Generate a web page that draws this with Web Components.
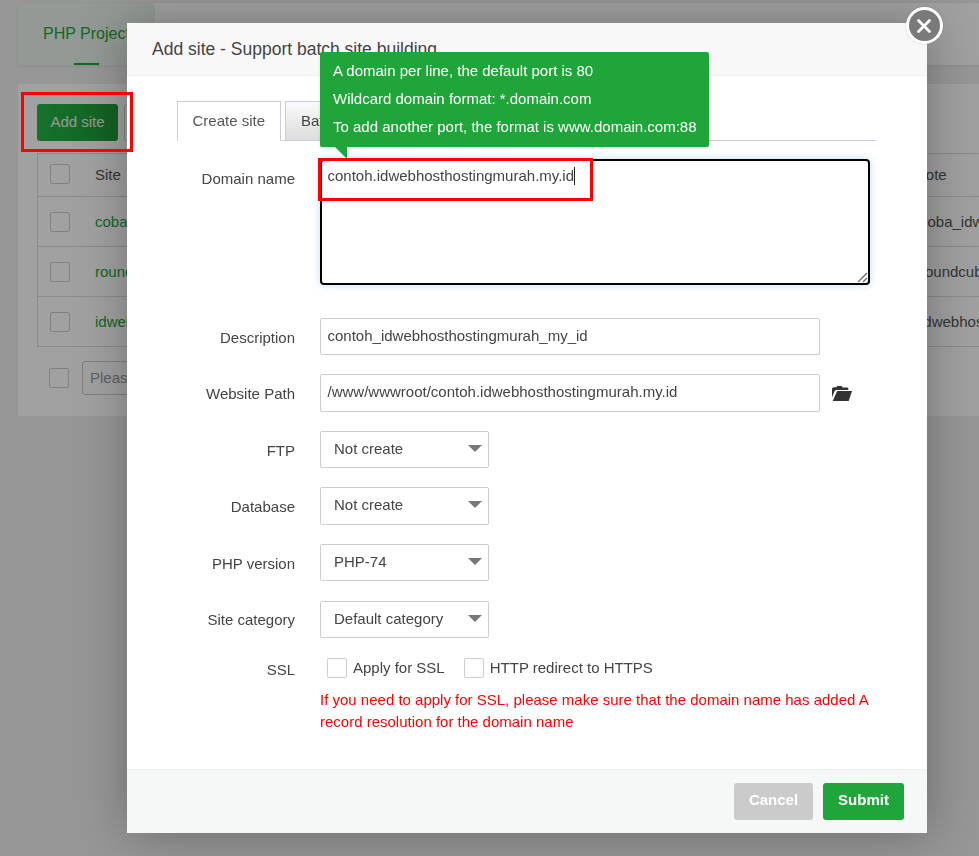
<!DOCTYPE html>
<html><head><meta charset="utf-8">
<style>
html,body{margin:0;padding:0;height:100%;overflow:hidden;background:#f0f0f0}
body{font:15px "Liberation Sans",Arial,sans-serif;color:#444}
</style></head><body>
<bg-page></bg-page>
<modal-shade></modal-shade>
<site-dialog>
  <span slot="title">Add site - Support batch site building</span>
  <form-row label="Domain name"><domain-box>contoh.idwebhosthostingmurah.my.id</domain-box></form-row>
  <form-row label="Description"><text-field>contoh_idwebhosthostingmurah_my_id</text-field></form-row>
  <form-row label="Website Path"><text-field folder>/www/wwwroot/contoh.idwebhosthostingmurah.my.id</text-field></form-row>
  <form-row label="FTP"><select-box>Not create</select-box></form-row>
  <form-row label="Database"><select-box>Not create</select-box></form-row>
  <form-row label="PHP version"><select-box>PHP-74</select-box></form-row>
  <form-row label="Site category" style="--lh:38px"><select-box>Default category</select-box></form-row>
  <form-row label="SSL" style="--lh:26px"><ssl-block></ssl-block></form-row>
</site-dialog>
<hint-tip></hint-tip>
<mark-rect style="left:21px;top:92px;width:106px;height:54px"></mark-rect>
<mark-rect style="left:318px;top:158px;width:269px;height:37px"></mark-rect>
<script>
function def(name,html,connected){
  customElements.define(name,class extends HTMLElement{
    constructor(){super();this.attachShadow({mode:'open'}).innerHTML=html}
    connectedCallback(){if(connected)connected.call(this,this.shadowRoot)}
  });
}
const cb='display:inline-block;width:18px;height:18px;border:1px solid #ccc;border-radius:2px;background:#fff;box-sizing:content-box';
def('bg-page',`<style>
:host{display:block;width:979px;height:856px;padding:3px 0 0 18px;box-sizing:border-box;overflow:hidden;background:#f0f0f0;color:#555;font:15px "Liberation Sans",Arial,sans-serif}
.top{display:flex;width:1200px;height:62px;background:#fff;border-radius:4px 0 0 4px;box-shadow:0 1px 4px rgba(0,0,0,.08)}
.tab{width:137px;box-sizing:border-box;padding:22px 0 0 25px;background:#e9f3ec;color:#20a53a;font-size:16px;position:relative;border-radius:4px;white-space:nowrap}
.tab i{display:block;width:25px;height:2px;background:#20a53a;position:absolute;left:56px;bottom:0}
.panel{width:1200px;margin-top:19px;height:332px;background:#fff;padding:20px 19px;box-sizing:border-box}
.bar{display:flex;gap:6px;height:37px;margin-bottom:12px}
.add{width:81px;height:37px;padding-bottom:3px;box-sizing:border-box;background:linear-gradient(90deg,#22b545,#209a38);color:#f0f0f0;border-radius:3px;display:flex;align-items:center;justify-content:center}
.ghost{width:80px;border:1px solid #ccc;border-radius:3px;box-sizing:border-box}
.tbl{border:1px solid #ddd;border-right:0;width:1143px;box-sizing:border-box}
.r{display:grid;grid-template-columns:57px 819px 1fr;height:50px;align-items:center;border-top:1px solid #ddd;white-space:nowrap;box-sizing:border-box}
.r:first-child{height:42px;border-top:0;padding-bottom:2px}
.r:first-child div:last-child{padding-left:1px}
.r:not(:first-child) div:last-child{padding-left:6px}
.r span:first-child{margin-left:12px;${cb}}
a{color:#20a53a}
.foot{display:flex;align-items:center;gap:13px;margin:14px 0 0 12px}
.foot b{${cb}}
.sel{width:160px;height:34px;border:1px solid #ccc;border-radius:3px;box-sizing:border-box;padding:0 7px;line-height:32px;color:#999}
</style>
<div class="top"><div class="tab">PHP Project<i></i></div></div>
<div class="panel">
  <div class="bar"><div class="add">Add site</div><div class="ghost"></div></div>
  <div class="tbl">
    <div class="r"><span></span><div>Site</div><div>Note</div></div>
    <div class="r"><span></span><a>coba.idwebhost</a><div>coba_idwebhost</div></div>
    <div class="r"><span></span><a>roundcube</a><div>roundcube_idwebhost</div></div>
    <div class="r"><span></span><a>idwebhost</a><div>idwebhost_my_id</div></div>
  </div>
  <div class="foot"><b></b><div class="sel">Please select</div></div>
</div>`);
def('modal-shade',`<style>:host{display:block;position:fixed;inset:0;background:rgba(0,0,0,.37)}</style>`);
def('site-dialog',`<style>
:host{position:absolute;left:127px;top:23px;width:800px;height:810px;display:flex;flex-direction:column;background:#fff;box-shadow:1px 1px 50px rgba(0,0,0,.3);color:#444;font:15px "Liberation Sans",Arial,sans-serif}
header{height:53px;box-sizing:border-box;background:#f8f8f8;border-bottom:1px solid #eee;padding:0 25px;font-size:17.5px;line-height:53px;color:#444;white-space:nowrap}
main{flex:1;padding:25px 50px 0;min-height:0}
.tabs{display:flex;gap:4px;border-bottom:1px solid #ccccdd;height:39px;margin-bottom:18px}
.tabs div{height:40px;box-sizing:border-box;border:1px solid #ccccdd;padding:0 14.500px;line-height:38px;white-space:nowrap;overflow:hidden}
.on{width:104px;background:#fff;border-bottom:0!important;color:#555}
.off{width:110px;padding-left:15px!important;background:linear-gradient(#fafafa,#ddd)}
footer{height:64px;box-sizing:border-box;background:#f6f8f8;border-top:1px solid #eee;display:flex;justify-content:flex-end;align-items:center;gap:10px;padding:0 23px 0 0}
footer div{height:37px;line-height:34px;border-radius:3px;color:#fff;font-weight:bold;text-align:center}
.c{width:79px;background:#cbcbcb}
.s{width:81px;background:#20a53a}
.x{position:absolute;right:-16px;top:-16px;width:31px;height:31px;border-radius:50%;background:#7a7a7a;border:3px solid #fff;display:flex;align-items:center;justify-content:center;box-shadow:0 0 2px rgba(0,0,0,.2)}
</style>
<header><slot name="title"></slot></header>
<main><div class="tabs"><div class="on">Create site</div><div class="off">Batch creation</div></div><slot></slot></main>
<footer><div class="c">Cancel</div><div class="s">Submit</div></footer>
<div class="x"><svg width="16" height="16" viewBox="0 0 16 16" style="margin-left:-1px"><path d="M2.500 2.500l11 11M13.500 2.500l-11 11" stroke="#fff" stroke-width="2.800" stroke-linecap="round"/></svg></div>`);
def('form-row',`<style>
:host{display:flex;margin-bottom:19.05px;align-items:flex-start}
label{width:118px;height:20px;flex:none;text-align:right;line-height:var(--lh,39px);margin-right:25px;color:#444;white-space:nowrap}
</style><label></label><slot></slot>`,function(r){r.querySelector('label').textContent=this.getAttribute('label')});
def('domain-box',`<style>
:host{display:block;width:550px;height:126px;box-sizing:border-box;border:2px solid #000;border-radius:4px;box-shadow:0 0 8px rgba(102,175,233,.4);margin-bottom:13.75px;padding:4px 5.500px;background:#fff;position:relative;line-height:21px;color:#444;white-space:nowrap}
i{display:inline-block;width:1px;height:18px;background:#222;vertical-align:-4px}
svg{position:absolute;right:0;bottom:0}
</style><slot></slot><i></i><svg width="11" height="11" viewBox="0 0 11 11"><path d="M1 10L10 1M6 10l4-4" stroke="#666" stroke-width="1.200" fill="none"/></svg>`);
def('text-field',`<style>
:host{display:flex;align-items:center}
div{width:500px;height:37.500px;box-sizing:border-box;border:1px solid #ccc;border-radius:2px;padding:0 6.500px;line-height:34px;color:#444;white-space:nowrap}
svg{margin-left:12px;display:none}
:host([folder]) svg{display:block}
</style><div><slot></slot></div><svg width="20" height="15" viewBox="0 0 20 15"><path fill="#333" d="M0 3.200C0 2 .8 1.200 2 1.200h2.200L5.300 0h4.400l1 1.500H15c.8 0 1.300.6 1.300 1.400v1H5C3.700 3.900 2.800 4.500 2.400 5.500L0 11.500Z"/><path fill="#333" d="M5.200 5h14.800L16.700 15H0.700Z"/></svg>`);
def('select-box',`<style>
:host{display:block;width:169px;height:37.500px;box-sizing:border-box;border:1px solid #ccc;border-radius:2px;padding:0 13px;line-height:34px;position:relative;color:#444;white-space:nowrap}
i{position:absolute;right:6px;top:13px;width:0;height:0;border:7px solid transparent;border-top:7px solid #777;border-bottom:0}
</style><slot></slot><i></i>`);
def('ssl-block',`<style>
:host{display:block;width:552px;color:#444}
.l{display:flex;align-items:center;height:20px;margin:1px 0 0 7px;white-space:nowrap}
b{${cb};margin-right:6px}
span{margin-right:19px;position:relative;top:-1px}
p{margin:11px 0 0;color:#f00;line-height:21.500px}
</style><div class="l"><b></b><span>Apply for SSL</span><b></b><span>HTTP redirect to HTTPS</span></div>
<p>If you need to apply for SSL, please make sure that the domain name has added A record resolution for the domain name</p>`);
def('hint-tip',`<style>
:host{position:absolute;left:320px;top:52px;width:389px;height:95px;box-sizing:border-box;background:#20a53a;color:#fff;border-radius:2px;padding:5px 13px;font:15px/28px "Liberation Sans",Arial,sans-serif;white-space:nowrap;box-shadow:0 1px 3px rgba(0,0,0,.12)}
i{position:absolute;left:15px;top:95px;border-right:12px solid #20a53a;border-bottom:12px solid transparent}
</style><div>A domain per line, the default port is 80</div><div>Wildcard domain format: *.domain.com</div><div>To add another port, the format is www.domain.com:88</div><i></i>`);
def('mark-rect',`<style>:host{position:absolute;display:block;border:3px solid #f00;pointer-events:none}</style>`);
</script>
</body></html>
